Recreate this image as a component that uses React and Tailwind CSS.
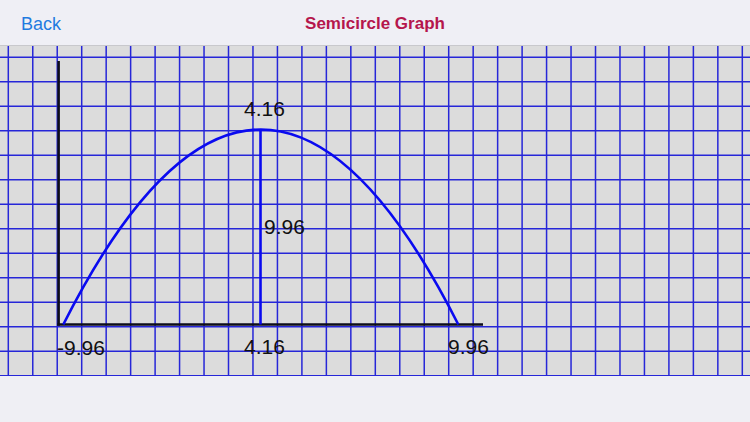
import React from "react";

const W = 750;
const H = 330;
const STEP_X = 24.467;
const STEP_Y = 24.49;

function Graph() {
  const vx = Array.from({ length: 31 }, (_, k) => 8.3 + STEP_X * k);
  const hy = Array.from({ length: 14 }, (_, k) => 11.3 + STEP_Y * k);
  const lineColor = "#2626d8";
  return (
    <svg
      viewBox={`0 0 ${W} ${H}`}
      width={W}
      height={H}
      className="block"
      style={{ fontFamily: '"Liberation Sans", Arial, sans-serif' }}
    >
      {hy.map((y, i) => (
        <line key={`h${i}`} x1={0} y1={y} x2={W} y2={y} stroke={lineColor} strokeWidth={1.5} />
      ))}
      {vx.map((x, i) => (
        <line key={`v${i}`} x1={x} y1={0} x2={x} y2={H} stroke={lineColor} strokeWidth={1.5} />
      ))}
      {/* axes */}
      <line x1={58.6} y1={15} x2={58.6} y2={279.8} stroke="#0d0d1a" strokeWidth={2.6} />
      <line x1={57.3} y1={278.5} x2={483} y2={278.5} stroke="#0d0d1a" strokeWidth={2.6} />
      {/* curve */}
      <path
        d="M63.3 278.5 Q260.8 -111.5 458.3 278.5"
        fill="none"
        stroke="#0a0af0"
        strokeWidth={2.6}
      />
      <line x1={260.5} y1={83.5} x2={260.5} y2={278.5} stroke="#0a0af0" strokeWidth={2.6} />
      {/* labels */}
      <g fill="#111111" fontSize={21}>
        <text x={244} y={70}>4.16</text>
        <text x={264} y={187.5}>9.96</text>
        <text x={57} y={308.5}>-9.96</text>
        <text x={244} y={308}>4.16</text>
        <text x={448} y={308}>9.96</text>
      </g>
    </svg>
  );
}

export default function App() {
  return (
    <div
      className="w-[750px] h-[422px] flex flex-col bg-[#efeff4] overflow-hidden"
      style={{ fontFamily: '"Liberation Sans", Arial, sans-serif' }}
    >
      <header className="relative h-[46px] shrink-0 border-b border-[#c8c8cc] bg-[#efeff5] flex items-center pt-[2px]">
        <span className="pl-[21px] text-[18px] text-[#1f7be0] font-medium leading-none">Back</span>
        <span className="absolute left-0 right-0 text-center text-[17px] font-bold text-[#b5164c] leading-none">
          Semicircle Graph
        </span>
      </header>
      <div className="h-[330px] shrink-0 bg-[#dcdcdc]">
        <Graph />
      </div>
      <div className="flex-1 bg-[#efeff4]" />
    </div>
  );
}
